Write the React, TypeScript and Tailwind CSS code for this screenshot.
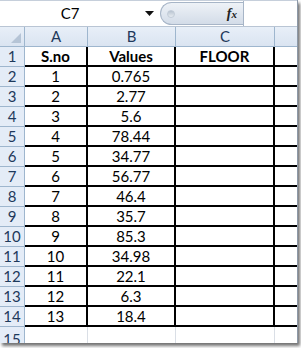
import React from "react";

const rows: [string, string, string][] = [
  ["S.no", "Values", "FLOOR"],
  ["1", "0.765", ""],
  ["2", "2.77", ""],
  ["3", "5.6", ""],
  ["4", "78.44", ""],
  ["5", "34.77", ""],
  ["6", "56.77", ""],
  ["7", "46.4", ""],
  ["8", "35.7", ""],
  ["9", "85.3", ""],
  ["10", "34.98", ""],
  ["11", "22.1", ""],
  ["12", "6.3", ""],
  ["13", "18.4", ""],
];

const font = { fontFamily: "Lato, 'Open Sans', sans-serif" };

export default function App() {
  return (
    <div className="w-[301px] h-[348px] bg-white overflow-hidden" style={font}>
      <div className="w-[298px] h-[343px] bg-white flex flex-col shadow-[2px_3px_3px_rgba(0,0,0,0.55)] border-r border-[#8d99a8] overflow-hidden">
        {/* formula bar */}
        <div className="h-[26px] flex border-t border-[#c6cfdb] bg-white">
          <div className="w-[160px] flex items-center">
            <div className="w-[140px] text-center text-[15px] text-black">C7</div>
            <svg width="9" height="5" viewBox="0 0 9 5" className="ml-[5px]">
              <path d="M0 0 L9 0 L4.5 5 Z" fill="#111" />
            </svg>
          </div>
          <div className="w-[83px] mt-[1px] mb-[1px] rounded-l-full border border-r-0 border-[#a7b5c7] bg-gradient-to-b from-[#eef2f7] to-[#d3dce8] flex items-center justify-between pl-[6px] pr-[6px]">
            <div className="w-[8px] h-[8px] rounded-full bg-gradient-to-b from-[#b8c3d0] to-[#e8edf2] border border-[#c2ccd8]" />
            <span
              className="text-[14px] italic font-bold text-[#222]"
              style={{ fontFamily: "'Liberation Serif', serif" }}
            >
              f<span className="text-[11px]">x</span>
            </span>
          </div>
          <div className="flex-1 border-l border-[#a7b5c7] bg-white" />
        </div>
        <div className="h-[3px] border-t border-[#b9c5d4] bg-[#e9eef5]" />
        {/* column header */}
        <div className="h-[20px] flex bg-gradient-to-b from-[#e8eff8] to-[#dae4f1] border-b border-[#9eb6ce] text-[15px] text-[#1e395b]">
          <div className="w-[25px] border-r border-[#9eb6ce] relative">
            <svg width="10" height="10" viewBox="0 0 10 10" className="absolute right-[3px] bottom-[3px]">
              <path d="M10 0 L10 10 L0 10 Z" fill="#b5c4d6" />
            </svg>
          </div>
          <div className="w-[63px] border-r border-[#9eb6ce] flex items-center justify-center">A</div>
          <div className="w-[88px] border-r border-[#9eb6ce] flex items-center justify-center">B</div>
          <div className="w-[99px] border-r border-[#9eb6ce] flex items-center justify-center">C</div>
          <div className="flex-1" />
        </div>
        {rows.map((r, i) => (
          <div key={i} className="h-[20px] flex text-[15px]">
            <div className="w-[25px] bg-[#e4ecf7] border-r border-b border-[#9eb6ce] flex items-center justify-center text-[#1e395b]">
              {i + 1}
            </div>
            <div className={`w-[63px] border-b-2 border-r-2 border-black flex items-center justify-center text-black ${i === 0 ? "font-bold" : ""}`}>
              {r[0]}
            </div>
            <div className={`w-[88px] border-b-2 border-r-2 border-black flex items-center justify-center text-black ${i === 0 ? "font-bold" : ""}`}>
              {r[1]}
            </div>
            <div className={`w-[99px] border-b-2 border-r-2 border-black flex items-center justify-center text-black ${i === 0 ? "font-bold" : ""}`}>
              {r[2]}
            </div>
            <div className="flex-1 border-b-2 border-black" />
          </div>
        ))}
        <div className="flex-1 flex text-[15px]">
          <div className="w-[25px] bg-[#e4ecf7] border-r border-[#9eb6ce] flex justify-center pt-[1px] text-[#1e395b]">
            15
          </div>
          <div className="w-[63px] border-r border-[#dadfe6]" />
          <div className="w-[88px] border-r border-[#dadfe6]" />
          <div className="w-[99px] border-r border-[#dadfe6]" />
          <div className="flex-1" />
        </div>
      </div>
    </div>
  );
}
